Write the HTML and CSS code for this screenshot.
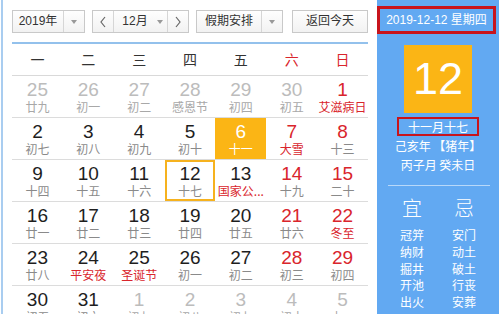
FILE: index.html
```html
<!DOCTYPE html>
<html lang="zh-CN">
<head>
<meta charset="utf-8">
<title>万年历</title>
<link rel="stylesheet" href="styles.css">
</head>
<body>
<div class="app">
  <div class="main">
    <div class="toolbar">
      <div class="select sel-year"><span class="sel-text">2019年</span><span class="sel-arrow"><i class="tri"></i></span></div>
      <div class="month-group">
        <span class="nav-btn"><svg width="8" height="12" viewBox="0 0 8 12"><polyline points="6,1 2,6 6,11" fill="none" stroke="#666" stroke-width="1.2"/></svg></span>
        <span class="month-sel">12月<i class="tri"></i></span>
        <span class="nav-btn nav-next"><svg width="8" height="12" viewBox="0 0 8 12"><polyline points="2,1 6,6 2,11" fill="none" stroke="#666" stroke-width="1.2"/></svg></span>
      </div>
      <div class="select sel-holiday"><span class="sel-text">假期安排</span><span class="sel-arrow"><i class="tri"></i></span></div>
      <div class="btn-today">返回今天</div>
    </div>
    <div class="calendar">
      <div class="week-head">
        <span>一</span><span>二</span><span>三</span><span>四</span><span>五</span><span class="wkend">六</span><span class="wkend">日</span>
      </div>
      <div class="days">
        <div class="day other"><b>25</b><em>廿九</em></div>
        <div class="day other"><b>26</b><em>初一</em></div>
        <div class="day other"><b>27</b><em>初二</em></div>
        <div class="day other"><b>28</b><em>感恩节</em></div>
        <div class="day other"><b>29</b><em>初四</em></div>
        <div class="day other"><b>30</b><em>初五</em></div>
        <div class="day red-num"><b>1</b><em class="fest">艾滋病日</em></div>

        <div class="day"><b>2</b><em>初七</em></div>
        <div class="day"><b>3</b><em>初八</em></div>
        <div class="day"><b>4</b><em>初九</em></div>
        <div class="day"><b>5</b><em>初十</em></div>
        <div class="day today"><b>6</b><em>十一</em></div>
        <div class="day red-num"><b>7</b><em class="fest">大雪</em></div>
        <div class="day red-num"><b>8</b><em>十三</em></div>

        <div class="day"><b>9</b><em>十四</em></div>
        <div class="day"><b>10</b><em>十五</em></div>
        <div class="day"><b>11</b><em>十六</em></div>
        <div class="day selected"><b>12</b><em>十七</em></div>
        <div class="day"><b>13</b><em class="fest">国家公...</em></div>
        <div class="day red-num"><b>14</b><em>十九</em></div>
        <div class="day red-num"><b>15</b><em>二十</em></div>

        <div class="day"><b>16</b><em>廿一</em></div>
        <div class="day"><b>17</b><em>廿二</em></div>
        <div class="day"><b>18</b><em>廿三</em></div>
        <div class="day"><b>19</b><em>廿四</em></div>
        <div class="day"><b>20</b><em>廿五</em></div>
        <div class="day red-num"><b>21</b><em>廿六</em></div>
        <div class="day red-num"><b>22</b><em class="fest">冬至</em></div>

        <div class="day"><b>23</b><em>廿八</em></div>
        <div class="day"><b>24</b><em class="fest">平安夜</em></div>
        <div class="day"><b>25</b><em class="fest">圣诞节</em></div>
        <div class="day"><b>26</b><em>初一</em></div>
        <div class="day"><b>27</b><em>初二</em></div>
        <div class="day red-num"><b>28</b><em>初三</em></div>
        <div class="day red-num"><b>29</b><em>初四</em></div>

        <div class="day"><b>30</b><em>初五</em></div>
        <div class="day"><b>31</b><em>初六</em></div>
        <div class="day other"><b>1</b><em>初七</em></div>
        <div class="day other"><b>2</b><em>初八</em></div>
        <div class="day other"><b>3</b><em>初九</em></div>
        <div class="day other"><b>4</b><em>初十</em></div>
        <div class="day other"><b>5</b><em>十一</em></div>
      </div>
    </div>
  </div>
  <div class="side">
    <div class="side-date">2019-12-12 星期四</div>
    <div class="big-day">12</div>
    <div class="lunar-box">十一月十七</div>
    <div class="ganzhi">
      <div>己亥年 【猪年】</div>
      <div>丙子月 癸未日</div>
    </div>
    <div class="sep"></div>
    <div class="yiji">
      <div class="yj-col">
        <div class="yj-title">宜</div>
        <div class="yj-item">冠笄</div>
        <div class="yj-item">纳财</div>
        <div class="yj-item">掘井</div>
        <div class="yj-item">开池</div>
        <div class="yj-item">出火</div>
      </div>
      <div class="yj-col">
        <div class="yj-title">忌</div>
        <div class="yj-item">安门</div>
        <div class="yj-item">动土</div>
        <div class="yj-item">破土</div>
        <div class="yj-item">行丧</div>
        <div class="yj-item">安葬</div>
      </div>
    </div>
  </div>
</div>
</body>
</html>
```

FILE: styles.css
```css
* { box-sizing: border-box; }
html, body {
  margin: 0;
  padding: 0;
  background: #fff;
}
body {
  width: 499px;
  height: 314px;
  overflow: hidden;
  font-family: "Liberation Sans", "Noto Sans CJK SC", sans-serif;
  color: #333;
}
.app {
  display: flex;
  height: 314px;
}
.main {
  width: 376px;
  margin-left: 1px;
  border-left: 2px solid #a9cdf0;
  padding: 10px 8px 0 9px;
  flex: none;
}
.toolbar {
  display: flex;
  height: 23px;
  font-size: 12px;
  font-family: "Liberation Sans", "Noto Sans CJK SC", sans-serif;
  color: #333;
}
.select, .month-group, .btn-today {
  display: flex;
  height: 23px;
  border: 1px solid #c9c9c9;
  background: linear-gradient(#fefefe, #f2f2f2);
}
.sel-year { width: 73px; }
.sel-holiday { width: 87px; margin-left: 7px; }
.sel-text {
  flex: 1;
  text-align: center;
  line-height: 21px;
}
.sel-arrow {
  width: 21px;
  border-left: 1px solid #d6d6d6;
  display: flex;
  align-items: center;
  justify-content: center;
}
.tri {
  display: inline-block;
  width: 0;
  height: 0;
  border-left: 3.5px solid transparent;
  border-right: 3.5px solid transparent;
  border-top: 4px solid #999;
}
.month-group {
  width: 97px;
  margin-left: 7px;
}
.nav-btn {
  width: 21px;
  display: flex;
  align-items: center;
  justify-content: center;
  border-right: 1px solid #d6d6d6;
}
.nav-next {
  border-right: none;
  border-left: 1px solid #d6d6d6;
}
.month-sel {
  flex: 1;
  display: flex;
  align-items: center;
  justify-content: center;
  gap: 9px;
  padding-left: 4px;
  line-height: 21px;
}
.btn-today {
  width: 76px;
  margin-left: 9px;
  justify-content: center;
  line-height: 21px;
}
.calendar {
  margin-top: 9px;
  width: 356px;
  border-top: 2px solid #93c1ec;
}
.week-head {
  display: grid;
  grid-template-columns: repeat(7, 1fr);
  height: 32px;
  border-bottom: 1px solid #d9d9d9;
  font-family: "Noto Sans CJK SC", sans-serif;
  font-size: 14px;
  color: #333;
}
.week-head span {
  text-align: center;
  line-height: 31px;
}
.week-head .wkend { color: #d9252c; }
.days {
  display: grid;
  grid-template-columns: repeat(7, 1fr);
  grid-auto-rows: 42px;
}
.day {
  border-bottom: 1px solid #dcdcdc;
  text-align: center;
  padding-top: 5px;
  overflow: hidden;
}
.day b {
  display: block;
  font-family: "Liberation Sans", sans-serif;
  font-weight: normal;
  font-size: 19px;
  line-height: 18px;
  color: #1e1e1e;
}
.day em {
  display: block;
  font-style: normal;
  font-family: "Noto Sans CJK SC", sans-serif;
  font-size: 12px;
  line-height: 16px;
  color: #8a8a8a;
  white-space: nowrap;
}
.day.other b { color: #bcbcbc; }
.day.other em { color: #a8a8a8; }
.day.red-num b { color: #d9252c; }
.day em.fest { color: #d9252c; }
.day.today { background: #fbb515; }
.day.today b, .day.today em { color: #fff; }
.day.selected { box-shadow: inset 0 0 0 2px #f6b21e; }

.side {
  width: 122px;
  flex: none;
  background: #62a9f2;
  color: #fff;
  font-family: "Noto Sans CJK SC", sans-serif;
}
.side-date {
  margin: 6px 3px 0 0;
  height: 28px;
  border: 3px solid #c8141c;
  font-family: "Liberation Sans", "Noto Sans CJK SC", sans-serif;
  font-size: 12px;
  line-height: 22px;
  text-align: center;
  white-space: nowrap;
}
.big-day {
  width: 68px;
  height: 68px;
  margin: 11px auto 0;
  background: #fbb515;
  font-family: "Liberation Sans", sans-serif;
  font-size: 45px;
  line-height: 68px;
  text-align: center;
}
.lunar-box {
  width: 82px;
  height: 19px;
  margin: 4px auto 0;
  border: 2px solid #c8141c;
  font-size: 12px;
  line-height: 15px;
  text-align: center;
}
.ganzhi {
  text-align: center;
  font-size: 12px;
  line-height: 19px;
  margin-top: 0;
}
.sep {
  height: 1px;
  margin: 11px 9px 0 11px;
  background: rgba(255, 255, 255, 0.55);
}
.yiji {
  display: grid;
  grid-template-columns: 1fr 1fr;
  margin: 10px 9px 0 9px;
}
.yj-col { text-align: center; }
.yj-title {
  font-size: 20px;
  line-height: 24px;
  font-weight: 300;
  margin-bottom: 7px;
}
.yj-item {
  font-size: 12px;
  line-height: 16.75px;
}
```
